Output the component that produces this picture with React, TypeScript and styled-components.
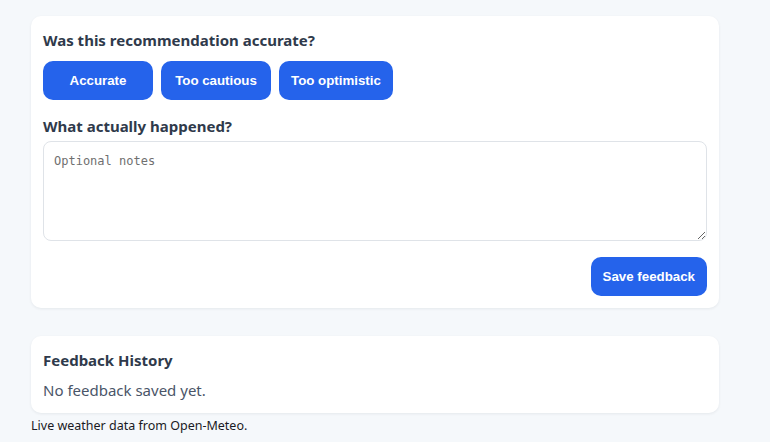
import React from "react";
import styled, { createGlobalStyle } from "styled-components";

const Global = createGlobalStyle`
  html, body { margin: 0; padding: 0; background: #f5f8fb; }
  body { font-family: "Noto Sans", "Open Sans", sans-serif; color: #1f2937; }
`;

const Page = styled.div`
  width: 688px;
  padding: 16px 0 0 31px;
  display: flex;
  flex-direction: column;
`;

const Card = styled.section<{ $mb?: number }>`
  background: #ffffff;
  border-radius: 10px;
  box-shadow: 0 1px 3px rgba(15, 23, 42, 0.07);
  padding: 12px;
  margin-bottom: ${(p) => p.$mb ?? 0}px;
  display: flex;
  flex-direction: column;
`;

const Heading = styled.h3`
  margin: 0;
  font-size: 15px;
  font-weight: 700;
  line-height: 24px;
  color: #2f3a4b;
`;

const ButtonRow = styled.div`
  display: flex;
  gap: 8px;
  margin: 9px 0 14px;
`;

const Button = styled.button`
  min-width: 110px;
  height: 39px;
  padding: 0 12px;
  border: none;
  border-radius: 10px;
  background: #2563eb;
  color: #ffffff;
  font-family: "Liberation Sans", Arial, sans-serif;
  font-weight: 700;
  font-size: 13.3px;
  cursor: pointer;
`;

const Notes = styled.textarea`
  margin-top: 3px;
  box-sizing: border-box;
  width: 100%;
  height: 100px;
  border: 1px solid #dfe3e8;
  border-radius: 8px;
  padding: 12px 10px 10px;
  font-family: "DejaVu Sans Mono", monospace;
  font-size: 12px;
  color: #333;
  resize: vertical;
  &::placeholder { color: #707070; }
`;

const Actions = styled.div`
  display: flex;
  justify-content: flex-end;
  margin-top: 16px;
`;

const Empty = styled.p`
  margin: 7px 0 0;
  font-size: 15px;
  line-height: 22px;
  color: #4a5568;
`;

const Footer = styled.p`
  margin: 4px 0 0;
  font-size: 12.5px;
  color: #1a1a24;
`;

export default function App() {
  return (
    <>
      <Global />
      <Page>
        <Card $mb={28}>
          <Heading>Was this recommendation accurate?</Heading>
          <ButtonRow>
            <Button>Accurate</Button>
            <Button>Too cautious</Button>
            <Button>Too optimistic</Button>
          </ButtonRow>
          <Heading>What actually happened?</Heading>
          <Notes placeholder="Optional notes" />
          <Actions>
            <Button>Save feedback</Button>
          </Actions>
        </Card>
        <Card>
          <Heading>Feedback History</Heading>
          <Empty>No feedback saved yet.</Empty>
        </Card>
        <Footer>Live weather data from Open-Meteo.</Footer>
      </Page>
    </>
  );
}
